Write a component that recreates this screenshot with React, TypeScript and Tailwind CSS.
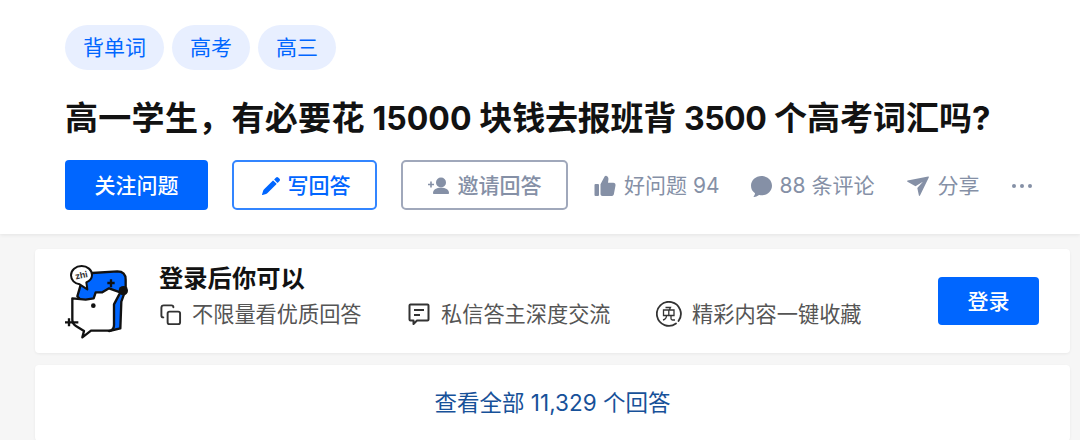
import type { ReactNode } from "react";

const cjk = "font-['Inter','Noto_Sans_CJK_SC',sans-serif]";

function Tag({ label }: { label: string }) {
  return (
    <span className="flex h-[45px] items-center rounded-full bg-[#e8efff] px-[18px] text-[21px] text-[#0066ff]">
      {label}
    </span>
  );
}

function PencilIcon() {
  return (
    <svg viewBox="0 0 24 24" className="mr-[5px] h-[24px] w-[24px]" fill="currentColor">
      <path d="M4.076 16.966a4.19 4.19 0 0 1 1.05-1.76l8.568-8.569a.524.524 0 0 1 .741 0l2.928 2.927a.524.524 0 0 1 0 .74l-8.568 8.57c-.49.49-1.096.852-1.761 1.051l-3.528 1.058a.394.394 0 0 1-.49-.488l1.06-3.53zM20.558 4.83c.59.59.59 1.546 0 2.136l-1.693 1.692a.503.503 0 0 1-.712 0l-2.812-2.812a.504.504 0 0 1 0-.712l1.693-1.693a1.51 1.51 0 0 1 2.135 0l1.389 1.389z" />
    </svg>
  );
}

function InviteIcon() {
  return (
    <svg viewBox="0 0 21 18" className="mr-[9px] h-[18px] w-[21px]" fill="currentColor">
      <circle cx="13" cy="5.500" r="5" />
      <path d="M5 16c0-3.400 3.600-5.200 8-5.200s8 1.800 8 5.200c0 .6-.4 1-1 1H6c-.6 0-1-.4-1-1z" />
      <path d="M2.200 4.500h1.600v2.200H6v1.600H3.800v2.200H2.200V8.300H0V6.700h2.200z" />
    </svg>
  );
}

function ThumbIcon() {
  return (
    <svg viewBox="0 0 22 22" className="h-[22px] w-[22px]" fill="currentColor">
      <rect x="0.500" y="9" width="4.500" height="12" rx="1" />
      <path d="M6.500 9.200 10.600 1.600c.4-.7 1.200-1 1.900-.7 1.500.6 2.200 2 1.900 3.600L14 7.800h5.300c1.500 0 2.500 1.300 2.200 2.700l-1.600 8.400c-.3 1.300-1.300 2.100-2.600 2.100H8.500c-1.100 0-2-.9-2-2z" />
    </svg>
  );
}

function CommentIcon() {
  return (
    <svg viewBox="3 3 18 18" className="h-[21px] w-[21px]" fill="currentColor">
      <path d="M10.241 19.313a.97.97 0 0 0-.77.2 7.908 7.908 0 0 1-3.772 1.482.409.409 0 0 1-.38-.637 5.825 5.825 0 0 0 1.11-2.237.605.605 0 0 0-.227-.59A7.935 7.935 0 0 1 3 11.250C3 6.700 7.030 3 12 3s9 3.700 9 8.250-4.373 9.108-10.759 8.063z" />
    </svg>
  );
}

function PlaneIcon() {
  return (
    <svg viewBox="0 0 22 22" className="ml-[2px] h-[22px] w-[22px]" fill="currentColor">
      <path d="M0.600 5.400 21.200 1.600c.5-.1.800.4.600.8L13 20.600c-.3.500-1 .4-1.100-.1l-1.600-7.600 5.600-6.200-7.400 4.600L.5 6.700c-.5-.3-.4-1.200.1-1.300z" />
    </svg>
  );
}

function CopyIcon() {
  return (
    <svg viewBox="0 0 24 24" className="h-[23px] w-[23px]" fill="none" stroke="#333" strokeWidth="2">
      <rect x="9" y="9" width="13" height="13" rx="2" />
      <path d="M15 4.500c0-1-.8-2-2-2H5c-1.500 0-2.500 1-2.500 2.500v8c0 1.200 1 2 2 2" strokeLinecap="round" />
    </svg>
  );
}

function MessageIcon() {
  return (
    <svg viewBox="0 0 24 24" className="h-[24px] w-[24px]" fill="none" stroke="#333" strokeWidth="2">
      <path d="M3.500 2.500h17c.6 0 1 .4 1 1v14c0 .6-.4 1-1 1H10l-3.500 3.500v-3.500h-3c-.6 0-1-.4-1-1v-14c0-.6.4-1 1-1z" strokeLinejoin="round" />
      <path d="M7 8h10M7 13h6" />
    </svg>
  );
}

function FreeIcon() {
  return (
    <svg viewBox="0 0 26 26" className="h-[26px] w-[26px]" fill="none" stroke="#333" strokeWidth="1.800">
      <path d="M20 22.500A12 12 0 1 1 22.500 20" strokeLinecap="round" />
      <path d="M9.500 6.500h5l-1 2M7.500 9h10.500v5.500H7.500zM12.800 9v5.500M10.500 14.500c0 2.500-1.500 4-3.500 4.500M15 14.500v3c0 1 .5 1.500 1.500 1.500h2.500" strokeWidth="1.300" />
    </svg>
  );
}

function ZhiLogo() {
  return (
    <svg viewBox="0 0 240 255" className="h-[85px] w-[80px]">
      <path
        d="M70 60 100 42 175 37Q200 37 200 62L200 92 187 128 184 208 150 216 55 112Z"
        fill="#0066ff"
        stroke="#111"
        strokeWidth="7"
        strokeLinejoin="round"
      />
      <path
        d="M40 118 80 122 104 118 110 100 130 100 150 88 184 100 165 136 165 198Q165 215 148 215L96 215 70 235 75 216 52 202Q40 194 40 182Z"
        fill="#fff"
        stroke="#111"
        strokeWidth="7"
        strokeLinejoin="round"
      />
      <circle cx="103" cy="140" r="7" fill="#111" />
      <circle cx="193" cy="95" r="14" fill="#111" />
      <path d="M145 72h22M156 61v24M18 190H58M30 178v24" stroke="#111" strokeWidth="7" />
      <path
        d="M68 21C50 21 36 33 36 49 36 63 47 74 62 76L85 91 82 70C93 65 99 58 99 48 99 33 85 21 68 21Z"
        fill="#fff"
        stroke="#111"
        strokeWidth="6"
        strokeLinejoin="round"
      />
      <text
        x="67"
        y="58"
        textAnchor="middle"
        fontSize="26"
        fontWeight="700"
        fontFamily="Inter, sans-serif"
        fill="#333"
        transform="rotate(-12 67 50)"
      >
        zhi
      </text>
    </svg>
  );
}

function Perk({ icon, label }: { icon: ReactNode; label: string }) {
  return (
    <div className="flex items-center gap-[10px]">
      {icon}
      <span className="text-[21.200px] leading-[30px] text-[#555]">{label}</span>
    </div>
  );
}

function Action({ icon, label }: { icon: ReactNode; label: string }) {
  return (
    <span className="flex items-center gap-[8px] text-[21px] text-[#8590a6]">
      {icon}
      {label}
    </span>
  );
}

export default function App() {
  return (
    <div className={`h-[440px] w-[1080px] overflow-hidden bg-[#f6f6f6] ${cjk}`}>
      <header className="h-[234px] bg-white pl-[65px] pt-[25px] shadow-[0_1px_4px_rgba(0,0,0,0.08)]">
        <div className="flex gap-[8px]">
          <Tag label="背单词" />
          <Tag label="高考" />
          <Tag label="高三" />
        </div>
        <h1 className="mt-[24px] h-[48px] text-[33px] font-bold leading-[48px] whitespace-nowrap text-[#121212]">
          <span className="tracking-[0.3px]">高一学生，有必要花</span> <span className="text-[32px]">15000</span>{" "}
          <span className="tracking-[-0.2px]">块钱去报班背</span>{" "}
          <span className="text-[32px] tracking-[-0.5px]">3500</span> 个高考词汇吗?
        </h1>
        <div className="mt-[18px] flex h-[50px] items-center">
          <button className="h-full w-[143px] rounded-[4px] bg-[#0066ff] pt-[1px] text-[21px] font-medium text-white">
            关注问题
          </button>
          <button className="ml-[24px] flex h-full w-[145px] items-center justify-center rounded-[5px] border-2 border-[#3385ff] pt-[1px] text-[21px] font-medium text-[#0066ff]">
            <PencilIcon />
            写回答
          </button>
          <button className="ml-[24px] flex h-full w-[167px] items-center justify-center rounded-[5px] border-2 border-[#a0a8bb] pt-[1px] text-[21px] font-medium text-[#8590a6]">
            <InviteIcon />
            邀请回答
          </button>
          <div className="ml-[26px] mt-[2px] flex items-center gap-[31px]">
            <Action icon={<ThumbIcon />} label="好问题 94" />
            <Action icon={<CommentIcon />} label="88 条评论" />
            <Action icon={<PlaneIcon />} label="分享" />
            <div className="ml-[2px] flex gap-[4px]">
              <span className="h-[4px] w-[4px] rounded-full bg-[#8590a6]" />
              <span className="h-[4px] w-[4px] rounded-full bg-[#8590a6]" />
              <span className="h-[4px] w-[4px] rounded-full bg-[#8590a6]" />
            </div>
          </div>
        </div>
      </header>

      <main className="ml-[35px] w-[1035px] pt-[15px]">
        <section className="flex h-[104px] items-center rounded-[4px] bg-white pl-[24px] pr-[31px] shadow-[0_1px_3px_rgba(18,18,18,0.06)]">
          <ZhiLogo />
          <div className="ml-[20px] flex-1 self-start pt-[12px]">
            <h2 className="text-[24.300px] font-semibold leading-[34px] text-[#121212]">登录后你可以</h2>
            <div className="mt-[4px] flex gap-[45.500px]">
              <Perk icon={<CopyIcon />} label="不限量看优质回答" />
              <Perk icon={<MessageIcon />} label="私信答主深度交流" />
              <Perk icon={<FreeIcon />} label="精彩内容一键收藏" />
            </div>
          </div>
          <button className="h-[48px] w-[101px] rounded-[4px] bg-[#0066ff] pt-[1px] text-[21px] font-medium text-white">
            登录
          </button>
        </section>
        <section className="mt-[12px] flex h-[76px] items-center justify-center rounded-[4px] bg-white text-[22.500px] text-[#175199] shadow-[0_1px_3px_rgba(18,18,18,0.06)]">
          查看全部 11,329 个回答
        </section>
      </main>
    </div>
  );
}
